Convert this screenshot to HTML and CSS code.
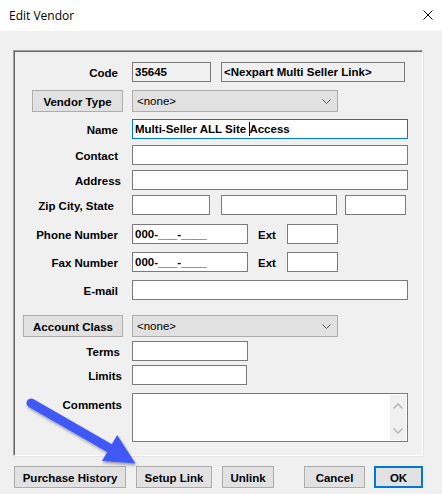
FILE: index.html
```html
<!DOCTYPE html>
<html lang="en">
<head>
    <meta charset="UTF-8">
    <title>Edit Vendor</title>
    <link rel="stylesheet" href="styles.css">
</head>
<body>
    <div class="dialog">
        <!-- Title bar -->
        <div class="titlebar">
            <span class="title">Edit Vendor</span>
            <svg class="close" width="10" height="10" viewBox="0 0 10 10">
                <path d="M0.5,0.5 L9.5,9.5 M9.5,0.5 L0.5,9.5" stroke="#000" stroke-width="1" fill="none"></path>
            </svg>
        </div>

        <div class="content">
            <!-- Vendor details -->
            <div class="group">
                <div class="row">
                    <div class="label">Code</div>
                    <div class="field readonly w-code">35645</div>
                    <div class="field readonly w-link">&lt;Nexpart Multi Seller Link&gt;</div>
                </div>

                <div class="row row-btn mt-8">
                    <div class="label label-btn"><div class="btn vendor-type">Vendor Type</div></div>
                    <div class="select">
                        <span>&lt;none&gt;</span>
                        <svg width="9" height="5" viewBox="0 0 9 5"><path d="M0.5,0.5 L4.5,4.5 L8.5,0.5" stroke="#555" fill="none"></path></svg>
                    </div>
                </div>

                <div class="row mt-7">
                    <div class="label">Name</div>
                    <div class="field focused w-full"><span>Multi-Seller ALL Site <span class="caret"></span>Access</span></div>
                </div>

                <div class="row mt-6">
                    <div class="label">Contact</div>
                    <div class="field w-full"></div>
                </div>

                <div class="row mt-5">
                    <div class="label pr-10">Address</div>
                    <div class="field w-full"></div>
                </div>

                <div class="row mt-5">
                    <div class="label pr-17">Zip City, State</div>
                    <div class="field w-zip"></div>
                    <div class="field w-city"></div>
                    <div class="field w-state"></div>
                </div>

                <div class="row mt-9">
                    <div class="label">Phone Number</div>
                    <div class="field w-phone">000-___-____</div>
                    <div class="ext">Ext</div>
                    <div class="field w-ext"></div>
                </div>

                <div class="row mt-8">
                    <div class="label">Fax Number</div>
                    <div class="field w-phone">000-___-____</div>
                    <div class="ext">Ext</div>
                    <div class="field w-ext"></div>
                </div>

                <div class="row mt-8">
                    <div class="label">E-mail</div>
                    <div class="field w-full"></div>
                </div>

                <div class="row row-btn mt-15">
                    <div class="label label-btn"><div class="btn account-class">Account Class</div></div>
                    <div class="select">
                        <span>&lt;none&gt;</span>
                        <svg width="9" height="5" viewBox="0 0 9 5"><path d="M0.5,0.5 L4.5,4.5 L8.5,0.5" stroke="#555" fill="none"></path></svg>
                    </div>
                </div>

                <div class="row mt-4">
                    <div class="label pr-11">Terms</div>
                    <div class="field w-phone"></div>
                </div>

                <div class="row mt-4">
                    <div class="label pr-9">Limits</div>
                    <div class="field w-limits"></div>
                </div>

                <div class="row row-memo mt-8">
                    <div class="label pr-9">Comments</div>
                    <div class="field memo w-full">
                        <div class="scrollbar">
                            <svg width="10" height="6" viewBox="0 0 10 6"><path d="M0.5,5.5 L5,1 L9.5,5.5" stroke="#b0b0b0" stroke-width="1.3" fill="none"></path></svg>
                            <svg width="10" height="6" viewBox="0 0 10 6"><path d="M0.5,0.5 L5,5 L9.5,0.5" stroke="#b0b0b0" stroke-width="1.3" fill="none"></path></svg>
                        </div>
                    </div>
                </div>
            </div>

            <!-- Dialog buttons -->
            <div class="buttons">
                <div class="btn b-history">Purchase History</div>
                <div class="btn b-setup">Setup Link</div>
                <div class="btn b-unlink">Unlink</div>
                <div class="btn b-cancel">Cancel</div>
                <div class="btn b-ok">OK</div>
            </div>
        </div>

        <!-- Callout arrow pointing at Setup Link -->
        <svg class="callout" width="442" height="494" viewBox="0 0 442 494">
            <defs>
                <filter id="shadow" x="-20%" y="-20%" width="140%" height="140%">
                    <feDropShadow dx="1" dy="2" stdDeviation="1.5" flood-color="#000" flood-opacity="0.35"></feDropShadow>
                </filter>
            </defs>
            <g filter="url(#shadow)" fill="#4059f5">
                <line x1="31" y1="403" x2="111" y2="449" stroke="#4059f5" stroke-width="9" stroke-linecap="round"></line>
                <polygon points="101.9,460.9 117.2,435.1 135.5,463.5"></polygon>
            </g>
        </svg>
    </div>
</body>
</html>
```

FILE: styles.css
```css
/* General */
body {
    margin: 0;
    background-color: #f0f0f0;
    font-family: 'Liberation Sans', Arial, sans-serif;
    font-size: 11.5px;
    color: #000;
}

.dialog {
    position: relative;
    width: 442px;
    height: 494px;
    overflow: hidden;
    background-color: #f0f0f0;
}

/* Title bar */
.titlebar {
    height: 31px;
    background-color: #fff;
    display: flex;
    align-items: center;
    justify-content: space-between;
    padding: 0 9px;
}

.title {
    font-family: 'Open Sans', 'Noto Sans', sans-serif;
    font-size: 12px;
    color: #000;
    margin-top: -1px;
}

.close {
    margin-top: -1px;
}

.content {
    padding: 19px 0 0 13px;
}

/* Group box */
.group {
    width: 408px;
    height: 393px;
    box-sizing: content-box;
    border-top: 1px solid #a0a0a0;
    border-left: 1px solid #a0a0a0;
    border-right: 1px solid #fff;
    border-bottom: 1px solid #fff;
    box-shadow: inset 1px 1px 0 #696969, 1px 1px 0 #e3e3e3;
    padding-top: 11px;
    display: flex;
    flex-direction: column;
}

.row {
    display: flex;
    align-items: center;
    height: 20px;
    font-weight: bold;
}

.row-btn {
    height: 22px;
}

.row-memo {
    height: 49px;
    align-items: flex-start;
}

.mt-4 { margin-top: 4px; }
.mt-5 { margin-top: 5px; }
.mt-6 { margin-top: 6px; }
.mt-7 { margin-top: 7px; }
.mt-8 { margin-top: 8px; }
.mt-9 { margin-top: 9px; }
.mt-15 { margin-top: 15px; }

/* Labels */
.label {
    width: 118px;
    flex: none;
    box-sizing: border-box;
    text-align: right;
    padding-right: 14px;
    padding-top: 2px;
}

.label-btn {
    display: flex;
    justify-content: flex-end;
    padding: 0 9px 0 0;
}

.pr-9 { padding-right: 10px; }
.pr-10 { padding-right: 11px; }
.pr-11 { padding-right: 12px; }
.pr-17 { padding-right: 18px; }

.row-memo .label {
    padding-top: 6px;
}

/* Text fields */
.field {
    height: 20px;
    box-sizing: border-box;
    border: 1px solid #7a7a7a;
    background-color: #fff;
    padding: 0 2px;
    display: flex;
    align-items: center;
    white-space: pre;
    flex: none;
}

.field.readonly {
    background-color: #f0f0f0;
}

.field.focused {
    border-color: #0078d7;
}

.caret {
    display: inline-block;
    width: 1px;
    height: 14px;
    background-color: #000;
    vertical-align: -3px;
    margin-right: -1px;
}

.w-code { width: 79px; margin-right: 10px; }
.w-link { width: 184px; }
.w-full { width: 276px; }
.w-zip { width: 78px; margin-right: 11px; }
.w-city { width: 116px; margin-right: 8px; }
.w-state { width: 61px; }
.w-phone { width: 116px; }
.w-limits { width: 115px; }
.w-ext { width: 51px; }

.ext {
    width: 39px;
    box-sizing: border-box;
    padding: 2px 0 0 10px;
    flex: none;
}

/* Memo with its scrollbar */
.memo {
    height: 49px;
    justify-content: flex-end;
    align-items: stretch;
    padding: 1px;
}

.scrollbar {
    width: 16px;
    background-color: #f0f0f0;
    display: flex;
    flex-direction: column;
    justify-content: space-between;
    align-items: center;
    padding: 8px 0 6px;
}

/* Combo boxes */
.select {
    width: 206px;
    height: 22px;
    box-sizing: border-box;
    background-color: #e1e1e1;
    border: 1px solid #adadad;
    display: flex;
    align-items: center;
    justify-content: space-between;
    padding: 0 6px 0 4px;
    font-weight: normal;
    flex: none;
}

/* Buttons */
.btn {
    height: 22px;
    box-sizing: border-box;
    background-color: #e1e1e1;
    border: 1px solid #adadad;
    font-weight: bold;
    display: flex;
    align-items: center;
    justify-content: center;
    padding-top: 1px;
    flex: none;
}

.vendor-type { width: 91px; }
.account-class { width: 100px; }

.buttons {
    display: flex;
    margin-top: 10px;
    padding-left: 1px;
}

.b-history { width: 112px; margin-right: 10px; }
.b-setup { width: 76px; margin-right: 10px; }
.b-unlink { width: 52px; margin-right: 30px; }
.b-cancel { width: 61px; margin-right: 9px; }
.b-ok { width: 49px; border: 2px solid #0078d7; }

/* Callout arrow over the dialog */
.callout {
    position: absolute;
    left: 0;
    top: 0;
    pointer-events: none;
}
```
